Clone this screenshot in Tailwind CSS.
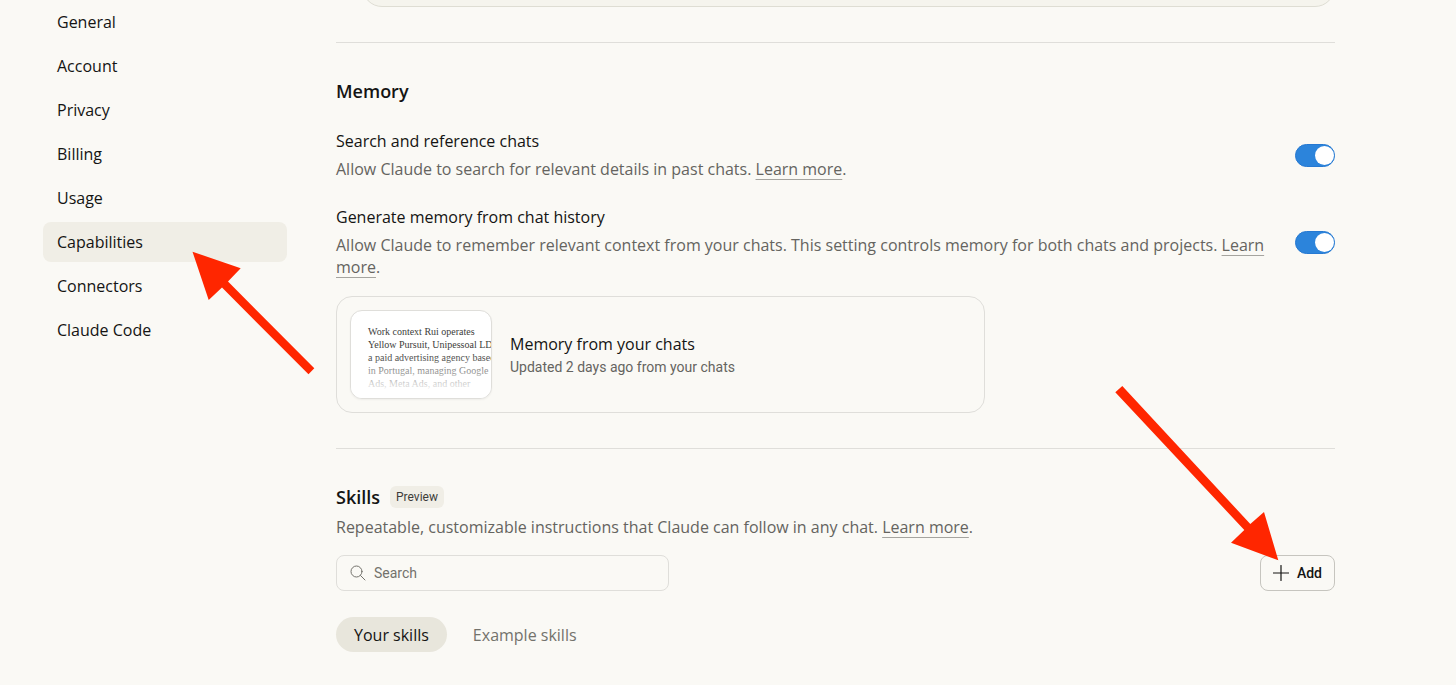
<!DOCTYPE html>
<html lang="en">
<head>
  <meta charset="UTF-8">
  <meta name="viewport" content="width=device-width, initial-scale=1.0">
  <script src="https://cdn.jsdelivr.net/npm/@tailwindcss/browser@4"></script>
  <title>Settings - Capabilities</title>
</head>
<body class="bg-[#faf9f5] text-[#141413] font-['Open_Sans',sans-serif] text-[16px] leading-[22px] overflow-x-hidden">
<div class="flex gap-[49px] pl-[43px] pr-[121px]">

  <!-- Sidebar -->
  <nav class="w-[244px] shrink-0 pt-0.5">
    <ul class="flex flex-col gap-1">
      <li><a href="#" class="flex items-center h-10 px-3.5 rounded-lg">General</a></li>
      <li><a href="#" class="flex items-center h-10 px-3.5 rounded-lg">Account</a></li>
      <li><a href="#" class="flex items-center h-10 px-3.5 rounded-lg">Privacy</a></li>
      <li><a href="#" class="flex items-center h-10 px-3.5 rounded-lg">Billing</a></li>
      <li><a href="#" class="flex items-center h-10 px-3.5 rounded-lg">Usage</a></li>
      <li class="relative">
        <a href="#" class="flex items-center h-10 px-3.5 rounded-lg bg-[#f0eee6]">Capabilities</a>
        <svg class="absolute left-[149px] top-[29px] z-10" width="123" height="124" viewBox="0 0 123 124" fill="#ff2600" aria-hidden="true">
          <path d="M0.5 0.7 L48.7 17.3 L36 30.5 L122.3 117.3 L116.5 123.3 L30 36.6 L16.7 49 Z"/>
        </svg>
      </li>
      <li><a href="#" class="flex items-center h-10 px-3.5 rounded-lg">Connectors</a></li>
      <li><a href="#" class="flex items-center h-10 px-3.5 rounded-lg">Claude Code</a></li>
    </ul>
  </nav>

  <main class="flex-1 min-w-0 pb-8">
    <!-- End of the previous section's card -->
    <div class="flex items-end h-[7px] overflow-hidden pl-[26px]">
      <div class="w-full h-12 shrink-0 rounded-[20px] border border-[#deddd3] bg-[#f5f4ed]"></div>
    </div>

    <!-- Memory -->
    <section class="mt-[35px] border-t border-[#dfdeda] pt-9">
      <h2 class="text-[18px] leading-6 font-semibold">Memory</h2>
      <div class="flex items-center justify-between gap-6 mt-[27px]">
        <div>
          <label for="search-chats" class="block">Search and reference chats</label>
          <p class="mt-1.5 text-[#65645f]">Allow Claude to search for relevant details in past chats. <a href="#" class="underline decoration-1 decoration-[#a5a49f] underline-offset-4">Learn more</a>.</p>
        </div>
        <input id="search-chats" type="checkbox" checked class="appearance-none shrink-0 flex items-center w-10 h-[23px] rounded-full border border-[#2679d2] bg-[#2c84db] checked:justify-end before:size-[19px] before:rounded-full before:bg-white">
      </div>
      <div class="flex items-center justify-between gap-6 mt-[26px]">
        <div>
          <label for="generate-memory" class="block">Generate memory from chat history</label>
          <p class="mt-1.5 text-[#65645f]">Allow Claude to remember relevant context from your chats. This setting controls memory for both chats and projects. <a href="#" class="underline decoration-1 decoration-[#a5a49f] underline-offset-4">Learn more</a>.</p>
        </div>
        <input id="generate-memory" type="checkbox" checked class="appearance-none shrink-0 flex items-center w-10 h-[23px] rounded-full border border-[#2679d2] bg-[#2c84db] checked:justify-end before:size-[19px] before:rounded-full before:bg-white">
      </div>

      <button class="flex items-center gap-[18px] w-[649px] max-w-full mt-[18px] p-[13px] rounded-2xl border border-[#dfdeda] text-left">
        <span class="relative block w-[142px] h-[89px] shrink-0 overflow-hidden rounded-xl border border-[#dfdeda] bg-white shadow-xs pl-[17px] pt-3.5 font-['Liberation_Serif',serif] text-[10px] leading-[13px] whitespace-nowrap text-[#3d3d3a]">
          Work context Rui operates<br>
          Yellow Pursuit, Unipessoal LDA,<br>
          a paid advertising agency based<br>
          in Portugal, managing Google<br>
          Ads, Meta Ads, and other
          <span class="absolute inset-x-0 bottom-0 h-11 bg-linear-to-t from-white from-10% to-white/0"></span>
        </span>
        <span>
          <span class="block">Memory from your chats</span>
          <span class="block mt-0.5 font-['Roboto',sans-serif] text-[14px] leading-5 text-[#65645f]">Updated 2 days ago from your chats</span>
        </span>
      </button>
    </section>

    <!-- Skills -->
    <section class="mt-[35px] border-t border-[#dfdeda] pt-9">
      <div class="flex items-center gap-2.5">
        <h2 class="text-[18px] leading-6 font-semibold">Skills</h2>
        <span class="px-1.5 rounded-md bg-[#f0eee6] font-['Roboto',sans-serif] text-[12px] leading-[22px] text-[#3d3d3a]">Preview</span>
      </div>
      <p class="mt-[7px] text-[#65645f]">Repeatable, customizable instructions that Claude can follow in any chat. <a href="#" class="underline decoration-1 decoration-[#a5a49f] underline-offset-4">Learn more</a>.</p>

      <div class="flex items-center justify-between mt-[17px]">
        <label class="flex items-center gap-2 w-[333px] h-9 px-[13px] rounded-lg border border-[#dfdeda] font-['Roboto',sans-serif] text-[14px] text-[#73726c]">
          <svg width="16" height="16" viewBox="0 0 16 16" fill="none" stroke="currentColor" stroke-linecap="round" aria-hidden="true">
            <circle cx="6.5" cy="6.5" r="5.5"/>
            <path d="M10.5 10.5 L15 15"/>
          </svg>
          <input type="text" placeholder="Search" aria-label="Search skills" class="flex-1 min-w-0 bg-transparent outline-none placeholder:text-[#73726c]">
        </label>
        <div class="relative">
          <button class="flex items-center gap-2 h-9 px-3 rounded-lg border border-[#c6c5bf] font-['Roboto',sans-serif] text-[14px] font-medium">
            <svg width="16" height="16" viewBox="0 0 16 16" fill="none" stroke="currentColor" stroke-width="1.2" stroke-linecap="round" aria-hidden="true">
              <path d="M8 0.5 V15.5 M0.5 8 H15.5"/>
            </svg>
            Add
          </button>
          <svg class="absolute right-14 bottom-[30px] z-10" width="164" height="175" viewBox="0 0 164 175" fill="#ff2600" aria-hidden="true">
            <path d="M163.3 174.3 L149 126 L135.3 138 L7.3 0 L0.3 6.3 L129.3 144 L116 156.7 Z"/>
          </svg>
        </div>
      </div>

      <div class="flex gap-2 mt-[26px]">
        <button class="h-[35px] px-[18px] rounded-full bg-[#e8e6dc]">Your skills</button>
        <button class="h-[35px] px-[18px] rounded-full text-[#73726c]">Example skills</button>
      </div>
    </section>
  </main>
</div>
</body>
</html>
